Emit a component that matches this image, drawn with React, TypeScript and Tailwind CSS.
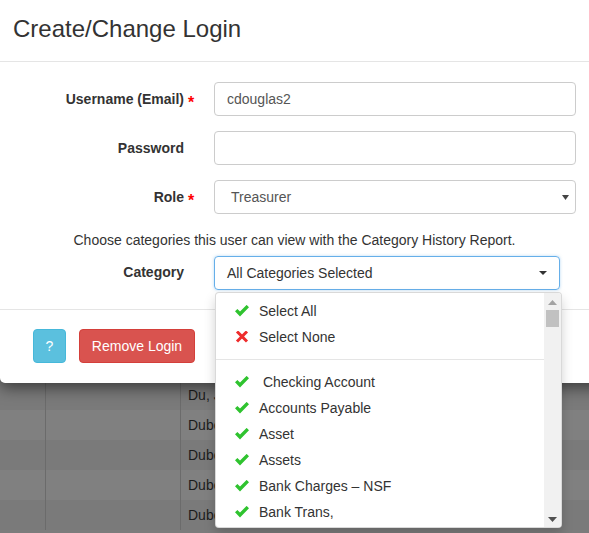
import React from "react";

const font = { fontFamily: '"Liberation Sans", Arial, sans-serif' };

const rows = ["Du, Jane", "Dubeau, Paul", "Dubeau, Anne", "Dubey, Raj", "Dubey, Sita"];

const categories = [
  " Checking Account",
  "Accounts Payable",
  "Asset",
  "Assets",
  "Bank Charges \u2013 NSF",
  "Bank Trans,",
];

function Check() {
  return (
    <svg width="14" height="12" viewBox="0 0 14 12" className="shrink-0">
      <path d="M0 6.3 L2.4 3.9 L5 6.5 L11.6 -0.1 L14 2.3 L5 11.4 Z" fill="#2fc32f" />
    </svg>
  );
}

function Cross() {
  return (
    <svg width="14" height="12" viewBox="0 0 14 12" className="shrink-0">
      <path d="M2 0.5 L12 10.5 M12 0.5 L2 10.5" stroke="#ee2c2c" strokeWidth="3" />
    </svg>
  );
}

function Star() {
  return <span className="absolute left-[100%] ml-[4px] top-[2px] text-[#ff0000] text-[16px] font-bold">*</span>;
}

function Label({ text, star }: { text: string; star?: boolean }) {
  return (
    <div className="w-[184px] shrink-0 flex justify-end">
      <span className="relative text-[14px] font-bold text-[#333]">
        {text}
        {star && <Star />}
      </span>
    </div>
  );
}

export default function App() {
  return (
    <div className="relative w-[589px] h-[533px] overflow-hidden bg-[#7c7c7c]" style={font}>
      {/* page behind the backdrop */}
      <div className="h-[380px]" />
      {rows.map((r, i) => (
        <div key={r} className={`flex h-[30px] ${i % 2 === 0 ? "bg-[#7a7a7a]" : "bg-[#808080]"}`}>
          <div className="w-[46px] border-r border-[#6b6b6b]" />
          <div className="w-[135px] border-r border-[#6b6b6b]" />
          <div className="w-[34px] overflow-hidden whitespace-nowrap pl-[7px] pt-[5px] text-[14px] text-[#1c1c1c]">{r}</div>
        </div>
      ))}

      {/* modal */}
      <div className="absolute left-0 top-0 w-[640px] bg-white rounded-b-[5px] shadow-[0_5px_15px_rgba(0,0,0,0.5)]">
        <div className="h-[62px] px-[13px] flex items-center border-b border-[#e5e5e5]">
          <h4 className="text-[24px] text-[#333] leading-none pb-[3px]">Create/Change Login</h4>
        </div>

        <div className="pt-[20px] pb-[19px] w-[589px]">
          <div className="flex items-center gap-[30px] mb-[15px]">
            <Label text="Username (Email)" star />
            <div className="w-[362px] h-[34px] border border-[#ccc] rounded-[4px] px-[12px] flex items-center text-[14px] text-[#555]">
              cdouglas2
            </div>
          </div>
          <div className="flex items-center gap-[30px] mb-[15px]">
            <Label text="Password" />
            <div className="w-[362px] h-[34px] border border-[#ccc] rounded-[4px]" />
          </div>
          <div className="flex items-center gap-[30px] mb-[16px]">
            <Label text="Role" star />
            <div className="w-[362px] h-[34px] border border-[#ccc] rounded-[4px] pl-[16px] pr-[6px] flex items-center justify-between text-[14px] text-[#555]">
              <span>Treasurer</span>
              <svg width="7" height="5" viewBox="0 0 7 5">
                <path d="M0 0 L7 0 L3.5 5 Z" fill="#444" />
              </svg>
            </div>
          </div>
          <p className="text-center text-[14px] text-[#333] mb-[5px]">
            Choose categories this user can view with the Category History Report.
          </p>
          <div className="flex items-start gap-[30px]">
            <div className="pt-[6px]">
              <Label text="Category" />
            </div>
            <div className="w-[346px] h-[34px] border border-[#66afe9] rounded-[4px] px-[12px] flex items-center justify-between text-[14px] text-[#333] shadow-[0_0_3px_rgba(102,175,233,0.5)]">
              <span>All Categories Selected</span>
              <span className="w-0 h-0 border-x-[4px] border-x-transparent border-t-[4px] border-t-[#333]" />
            </div>
          </div>
        </div>

        <div className="border-t border-[#e5e5e5] pt-[19px] pb-[20px] pl-[33px] flex gap-[13px]">
          <button className="w-[33px] h-[34px] rounded-[4px] bg-[#5bc0de] border border-[#46b8da] text-white text-[14px]">
            ?
          </button>
          <button className="w-[116px] h-[34px] rounded-[4px] bg-[#d9534f] border border-[#d43f3a] text-white text-[14px]">
            Remove Login
          </button>
        </div>
      </div>

      {/* category dropdown */}
      <div className="absolute left-[215px] top-[292px] w-[347px] h-[236px] bg-white border border-[rgba(0,0,0,0.15)] rounded-[4px] shadow-[0_6px_12px_rgba(0,0,0,0.175)] flex overflow-hidden">
        <div className="flex-1 pt-[5px] text-[14px] text-[#333]">
          <div className="h-[26px] pl-[19px] flex items-center gap-[10px]">
            <Check />
            <span>Select All</span>
          </div>
          <div className="h-[26px] pl-[19px] flex items-center gap-[10px]">
            <Cross />
            <span>Select None</span>
          </div>
          <div className="h-px bg-[#e5e5e5] my-[9px]" />
          {categories.map((c) => (
            <div key={c} className="h-[26px] pl-[19px] flex items-center gap-[10px] whitespace-pre">
              <Check />
              <span>{c}</span>
            </div>
          ))}
        </div>
        <div className="w-[17px] bg-[#f1f1f1] flex flex-col items-center">
          <svg width="9" height="5" viewBox="0 0 9 5" className="mt-[7px]">
            <path d="M0 5 L9 5 L4.5 0 Z" fill="#a3a3a3" />
          </svg>
          <div className="w-[13px] h-[17px] bg-[#c1c1c1] mt-[5px]" />
          <div className="flex-1" />
          <svg width="9" height="5" viewBox="0 0 9 5" className="mb-[5px]">
            <path d="M0 0 L9 0 L4.5 5 Z" fill="#505050" />
          </svg>
        </div>
      </div>
    </div>
  );
}
